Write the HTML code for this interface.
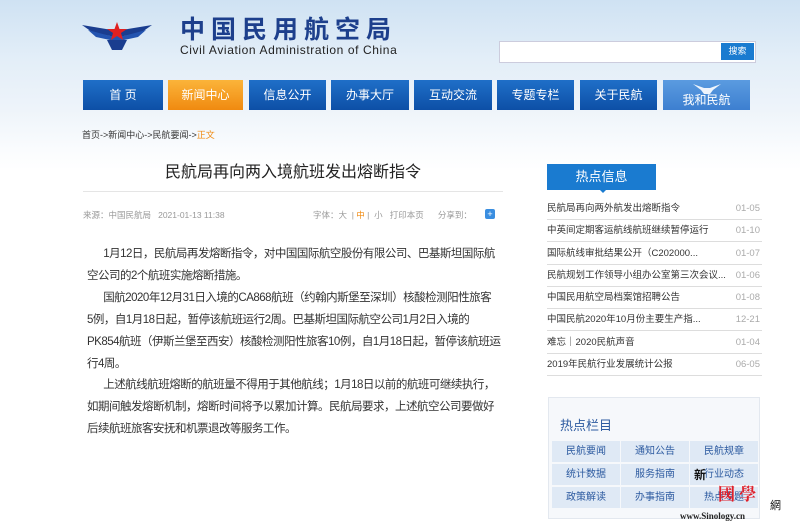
<!DOCTYPE html>
<html><head><meta charset="utf-8"><style>
*{margin:0;padding:0;box-sizing:border-box}
body{width:800px;height:526px;overflow:hidden;font-family:"Liberation Sans","Noto Sans CJK SC",sans-serif;background:linear-gradient(180deg,#cfe2f3 0,#e3eef8 60px,#eef4fa 110px,#fafcfe 150px,#fff 170px);position:relative;color:#333}
.a{position:absolute}
.nav div{position:absolute;top:80px;height:30px;background:linear-gradient(#1f6fc8,#0d4fa6);color:#fff;font-size:12px;text-align:center;line-height:30px}
.nav div.on{background:linear-gradient(#fbb43a,#f08a10)}
.body{left:87px;top:244px;font-size:11.5px;letter-spacing:-0.5px;line-height:21.9px;color:#333;white-space:nowrap}
.li{position:absolute;left:547px;width:215px;height:22px;font-size:9.5px;line-height:22px;border-bottom:1px solid #ddd;color:#333}
.li span{position:absolute;right:2px;color:#aaa}
.g div{position:absolute;width:68px;height:21px;background:#dfe9f5;color:#2c5aa0;font-size:10px;text-align:center;line-height:21px}
</style></head><body>
<svg class="a" style="left:82px;top:20px" width="70" height="32" viewBox="0 0 70 32">
<path d="M0 5 L30 10 L40 10 L70 5 L60 12 L42 16 L28 16 L10 12Z" fill="#1a3d8f"/>
<path d="M6 10 L28 16 L42 16 L64 10 L56 17 L42 20 L28 20 L14 17Z" fill="#2354b0"/>
<path d="M25 20 L45 20 L40 30 L30 30Z" fill="#1a3d8f"/>
<polygon points="35,2 37.5,9 45,9 39,13 41,20 35,16 29,20 31,13 25,9 32.5,9" fill="#e02020"/>
</svg>
<div class="a" style="left:180px;top:16px;font-size:25px;color:#1d3f8c;letter-spacing:6px;font-weight:bold;line-height:28px">中国民用航空局</div>
<div class="a" style="left:180px;top:43px;font-size:12px;color:#222;letter-spacing:0.6px">Civil Aviation Administration of China</div>
<div class="a" style="left:499px;top:41px;width:257px;height:22px;background:#fff;border:1px solid #ccd"></div>
<div class="a" style="left:721px;top:43px;width:33px;height:17px;background:#1a7bd0;color:#fff;font-size:9px;text-align:center;line-height:17px">搜索</div>
<div class="nav">
<div style="left:83px;width:80px">首 页</div>
<div class="on" style="left:168px;width:75px">新闻中心</div>
<div style="left:249px;width:77px">信息公开</div>
<div style="left:331px;width:78px">办事大厅</div>
<div style="left:414px;width:78px">互动交流</div>
<div style="left:497px;width:77px">专题专栏</div>
<div style="left:580px;width:77px">关于民航</div>
<div style="left:663px;width:87px;background:linear-gradient(#5b9be0,#3d7fd0);line-height:40px">我和民航</div>
</div>
<svg class="a" style="left:693px;top:83px" width="28" height="12" viewBox="0 0 28 12"><path d="M0 1 L11 5 L17 5 L28 1 L20 7 L17 11 L11 11 L8 7Z" fill="#fff" opacity=".9"/></svg>
<div class="a" style="left:82px;top:128px;font-size:9px;color:#333">首页->新闻中心->民航要闻-><span style="color:#f08a10">正文</span></div>
<div class="a" style="left:83px;top:158px;width:420px;text-align:center;font-size:16px;color:#222">民航局再向两入境航班发出熔断指令</div>
<div class="a" style="left:83px;top:191px;width:420px;border-top:1px solid #e5e5e5"></div>
<div class="a" style="left:83px;top:209px;font-size:8.5px;color:#999">来源：中国民航局 &nbsp; 2021-01-13 11:38</div>
<div class="a" style="left:313px;top:209px;font-size:8.5px;color:#999">字体：大 &nbsp;| <span style="color:#f08a10">中</span> | &nbsp;小 &nbsp; 打印本页 &nbsp; &nbsp; &nbsp;分享到：</div>
<div class="a" style="left:485px;top:209px;width:10px;height:10px;background:#3a8ee0;border-radius:2px;color:#fff;font-size:9px;line-height:10px;text-align:center">+</div>
<div class="a body">
<div>&emsp;&ensp;1月12日，民航局再发熔断指令，对中国国际航空股份有限公司、巴基斯坦国际航</div>
<div>空公司的2个航班实施熔断措施。</div>
<div>&emsp;&ensp;国航2020年12月31日入境的CA868航班（约翰内斯堡至深圳）核酸检测阳性旅客</div>
<div>5例，自1月18日起，暂停该航班运行2周。巴基斯坦国际航空公司1月2日入境的</div>
<div>PK854航班（伊斯兰堡至西安）核酸检测阳性旅客10例，自1月18日起，暂停该航班运</div>
<div>行4周。</div>
<div>&emsp;&ensp;上述航线航班熔断的航班量不得用于其他航线；1月18日以前的航班可继续执行，</div>
<div>如期间触发熔断机制，熔断时间将予以累加计算。民航局要求，上述航空公司要做好</div>
<div>后续航班旅客安抚和机票退改等服务工作。</div>
</div>
<div class="a" style="left:547px;top:164px;width:109px;height:26px;background:#1a7bd0;color:#fff;font-size:13px;text-align:center;line-height:26px">热点信息</div>
<div class="a" style="left:599px;top:189px;border:4px solid transparent;border-top-color:#1a7bd0"></div>
<div class="li" style="top:198px">民航局再向两外航发出熔断指令<span>01-05</span></div>
<div class="li" style="top:220px">中英间定期客运航线航班继续暂停运行<span>01-10</span></div>
<div class="li" style="top:243px">国际航线审批结果公开（C202000...<span>01-07</span></div>
<div class="li" style="top:265px">民航规划工作领导小组办公室第三次会议...<span>01-06</span></div>
<div class="li" style="top:287px">中国民用航空局档案馆招聘公告<span>01-08</span></div>
<div class="li" style="top:309px">中国民航2020年10月份主要生产指...<span>12-21</span></div>
<div class="li" style="top:332px">难忘｜2020民航声音<span>01-04</span></div>
<div class="li" style="top:354px">2019年民航行业发展统计公报<span>06-05</span></div>
<div class="a" style="left:548px;top:397px;width:212px;height:122px;background:#f6f8fb;border:1px solid #e3e8ef"></div>
<div class="a" style="left:560px;top:415px;font-size:13px;color:#2c5aa0">热点栏目</div>
<div class="g">
<div style="left:552px;top:441px">民航要闻</div><div style="left:621px;top:441px">通知公告</div><div style="left:690px;top:441px">民航规章</div>
<div style="left:552px;top:464px">统计数据</div><div style="left:621px;top:464px">服务指南</div><div style="left:690px;top:464px">行业动态</div>
<div style="left:552px;top:487px">政策解读</div><div style="left:621px;top:487px">办事指南</div><div style="left:690px;top:487px">热点专题</div>
</div>
<div class="a" style="left:718px;top:480px;font-size:17px;color:#e0202a;font-family:'Noto Serif CJK SC',serif;font-weight:bold">國 學</div>
<div class="a" style="left:694px;top:466px;font-size:12px;color:#111;font-weight:bold">新</div>
<div class="a" style="left:770px;top:497px;font-size:11px;color:#111">網</div>
<div class="a" style="left:680px;top:511px;font-size:9px;color:#222;font-family:'Liberation Serif',serif;font-weight:bold">www.Sinology.cn</div>
</body></html>
